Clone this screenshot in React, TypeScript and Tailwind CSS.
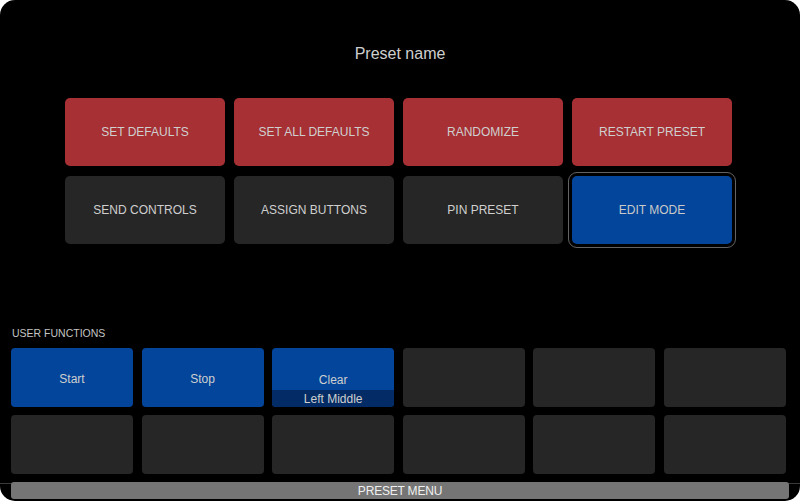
const presetActions = [
  { label: 'SET DEFAULTS', tone: 'red' },
  { label: 'SET ALL DEFAULTS', tone: 'red' },
  { label: 'RANDOMIZE', tone: 'red' },
  { label: 'RESTART PRESET', tone: 'red' },
  { label: 'SEND CONTROLS', tone: 'gray' },
  { label: 'ASSIGN BUTTONS', tone: 'gray' },
  { label: 'PIN PRESET', tone: 'gray' },
  { label: 'EDIT MODE', tone: 'blue' },
];

type Fn = { label?: string; sub?: string };

const userFunctions: Fn[] = [
  { label: 'Start' },
  { label: 'Stop' },
  { label: 'Clear', sub: 'Left Middle' },
  {}, {}, {},
  {}, {}, {}, {}, {}, {},
];

function ActionButton({ label, tone }: { label: string; tone: string }) {
  if (tone === 'blue') {
    // selected: outlined with a gap
    return (
      <div className="h-[68px] rounded-[5px] bg-[#02459a] flex items-center justify-center outline outline-1 outline-[#636363] outline-offset-[3px] text-[12px] text-[#c9c9c9]">
        {label}
      </div>
    );
  }
  return (
    <div
      className={
        tone === 'red'
          ? 'h-[68px] rounded-[5px] bg-[#a63033] flex items-center justify-center text-[12px] text-[#cfcfcf]'
          : 'h-[68px] rounded-[5px] bg-[#262626] flex items-center justify-center text-[12px] text-[#cfcfcf]'
      }
    >
      {label}
    </div>
  );
}

function FunctionCell({ fn }: { fn: Fn }) {
  if (!fn.label) return <div className="h-[59px] rounded-[4px] bg-[#262626]" />;
  return (
    <div className="h-[59px] rounded-[4px] bg-[#02459a] overflow-hidden flex flex-col text-[12px] text-[#cfcfcf]">
      {fn.sub ? (
        <>
          <div className="flex-1 flex items-end justify-center pb-[1px]">{fn.label}</div>
          <div className="h-[17px] bg-[#032c66] flex items-center justify-center">{fn.sub}</div>
        </>
      ) : (
        <div className="flex-1 flex items-center justify-center pt-[3px]">{fn.label}</div>
      )}
    </div>
  );
}

export default function App() {
  return (
    <div className="w-[800px] h-[501px] bg-white">
      <div className="h-full bg-black rounded-[15px] flex flex-col font-['Liberation_Sans',Arial,sans-serif]">
        <h1 className="pt-[44px] h-[62px] text-center text-[16px] leading-[19px] text-[#cfcfcf]">Preset name</h1>

        <div className="mt-[36px] ml-[65px] w-[667px] grid grid-cols-4 gap-x-[9px] gap-y-[10px]">
          {presetActions.map((a) => (
            <ActionButton key={a.label} label={a.label} tone={a.tone} />
          ))}
        </div>

        <div className="mt-[83px] pl-[12px] text-[10.5px] leading-[12px] text-[#c4c4c4]">USER FUNCTIONS</div>

        <div className="mt-[9px] ml-[11px] w-[775px] grid grid-cols-6 gap-x-[8.6px] gap-y-[8px]">
          {userFunctions.map((fn, i) => (
            <FunctionCell key={i} fn={fn} />
          ))}
        </div>

        {/* bottom menu bar over a thin rule */}
        <div className="mt-[8px] px-[11px] bg-[linear-gradient(to_bottom,transparent_1px,#3a3a3a_1px,#3a3a3a_2px,transparent_2px)]">
          <div className="h-[17px] rounded-[3px] bg-[#757575] flex items-center justify-center text-[12px] text-[#f0f0f0] font-['Liberation_Sans_Narrow','Liberation_Sans',sans-serif] tracking-[-0.2px]">
            PRESET MENU
          </div>
        </div>
      </div>
    </div>
  );
}
